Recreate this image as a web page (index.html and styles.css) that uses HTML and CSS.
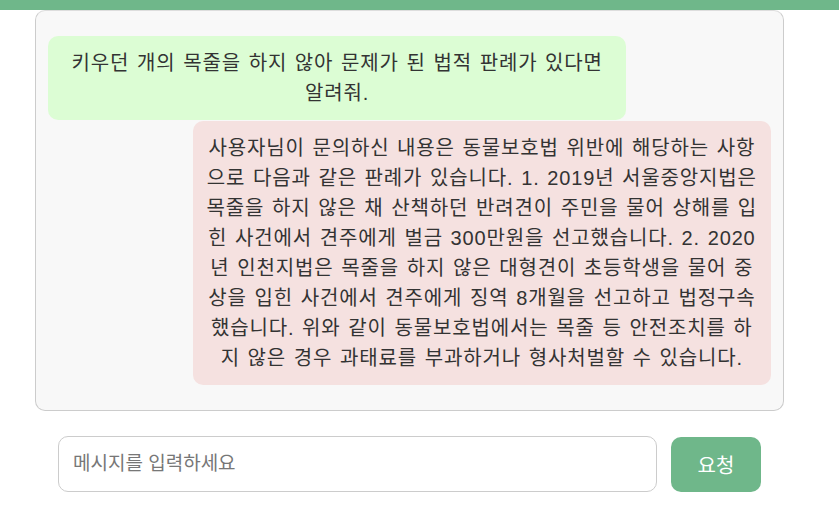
FILE: index.html
```html
<!DOCTYPE html>
<html lang="ko">
<head>
    <meta charset="UTF-8">
    <meta name="viewport" content="width=device-width, initial-scale=1.0">
    <title>판례 상담</title>
    <link rel="stylesheet" href="styles.css">
</head>
<body>
    <div class="top-bar"></div>
    <div class="chat-wrap">
        <div class="chat-box" id="chat-box">
            <div class="msg msg-user">키우던 개의 목줄을 하지 않아 문제가 된 법적 판례가 있다면 알려줘.</div>
            <div class="msg msg-bot">사용자님이 문의하신 내용은 동물보호법 위반에 해당하는 사항으로 다음과 같은 판례가 있습니다. 1. 2019년 서울중앙지법은 목줄을 하지 않은 채 산책하던 반려견이 주민을 물어 상해를 입힌 사건에서 견주에게 벌금 300만원을 선고했습니다. 2. 2020년 인천지법은 목줄을 하지 않은 대형견이 초등학생을 물어 중상을 입힌 사건에서 견주에게 징역 8개월을 선고하고 법정구속했습니다. 위와 같이 동물보호법에서는 목줄 등 안전조치를 하지 않은 경우 과태료를 부과하거나 형사처벌할 수 있습니다.</div>
        </div>
        <form class="input-row" id="chat-form">
            <input type="text" class="msg-input" id="msg-input" placeholder="메시지를 입력하세요">
            <button type="submit" class="send-btn">요청</button>
        </form>
    </div>
</body>
</html>
```

FILE: styles.css
```css
body {
    margin: 0;
    font-family: "Liberation Sans", "Noto Sans CJK KR", sans-serif;
    color: #333;
    background-color: #fff;
}

.top-bar {
    height: 10px;
    background-color: #6fb78a;
}

.chat-wrap {
    width: 749px;
    margin-left: 35px;
}

.chat-box {
    display: flex;
    flex-direction: column;
    gap: 1px;
    padding: 25px 12px;
    border: 1px solid #ccc;
    border-top-color: #ddd;
    border-radius: 10px;
    background-color: #f8f8f8;
}

.msg {
    max-width: 80%;
    padding: 12px 13px;
    border-radius: 10px;
    font-size: 20px;
    line-height: 30px;
    letter-spacing: 0.85px;
    word-spacing: 1.3px;
    text-align: center;
    box-sizing: border-box;
}

.msg-user {
    align-self: flex-start;
    background-color: #dcfdd4;
}

.msg-bot {
    align-self: flex-end;
    background-color: #f5e1e0;
}

.input-row {
    display: flex;
    gap: 14px;
    margin: 25px 23px 0;
}

.msg-input {
    flex: 1;
    height: 56px;
    padding: 0 14px;
    border: 1px solid #ccc;
    border-radius: 10px;
    font-family: inherit;
    font-size: 19px;
    color: #333;
    box-sizing: border-box;
    outline: none;
}

.msg-input::placeholder {
    color: #777;
}

.send-btn {
    width: 90px;
    height: 55px;
    margin-top: 1px;
    border: none;
    border-radius: 10px;
    background-color: #6fb78a;
    color: #fff;
    font-family: inherit;
    font-size: 20px;
    cursor: pointer;
}
```
